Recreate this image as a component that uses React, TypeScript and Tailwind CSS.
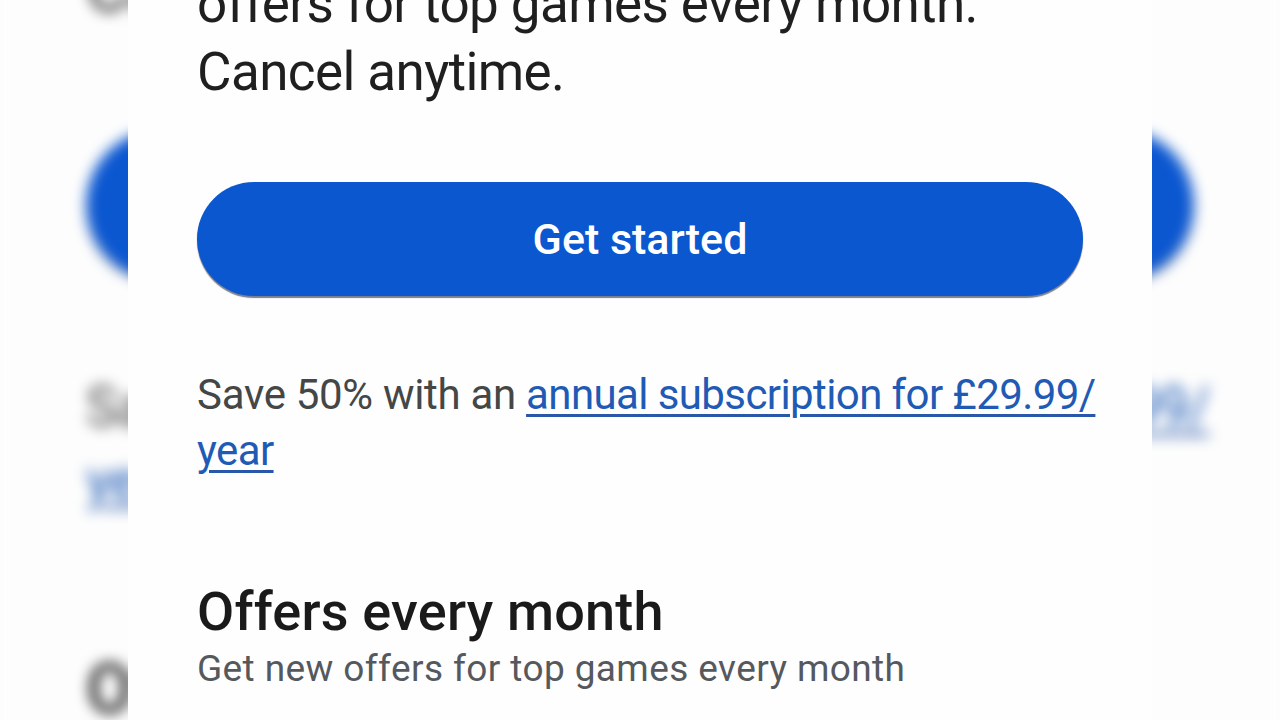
import React from 'react';

const font = { fontFamily: 'Roboto, "Noto Sans", sans-serif' };

function OfferContent() {
  return (
    <div className="flex flex-col pl-[69px] pr-[69px]" style={font}>
      <p className="-mt-[30px] text-[53px] leading-[68px] text-[#1f1f1f] tracking-[-0.6px]">
        offers for top games every month.
        <br />
        Cancel anytime.
      </p>

      <button className="mt-[76px] h-[114px] w-[886px] rounded-full bg-[#0b57d0] text-[43px] font-medium text-white shadow-[0_2px_1px_rgba(10,20,50,0.55)]">
        Get started
      </button>

      <p className="mt-[71px] w-[925px] text-[42px] leading-[56px] text-[#444746] tracking-[-0.3px]">
        Save 50% with an{' '}
        <a className="text-[#1f5bb5] underline decoration-[#2a58a8] decoration-[3px] underline-offset-[5px] tracking-[-0.6px]">
          annual subscription for £29.99/ year
        </a>
      </p>

      <h2 className="mt-[103px] text-[54px] leading-[60px] font-medium text-[#1a1a1a] tracking-[0.2px]">
        Offers every month
      </h2>
      <p className="mt-[5px] text-[37px] leading-[44px] text-[#55595e] tracking-[0.4px]">
        Get new offers for top games every month
      </p>
    </div>
  );
}

export default function App() {
  return (
    <div className="relative h-[720px] w-[1280px] overflow-hidden bg-[#fdfdfd]">
      {/* blurred, zoomed copy behind the frame */}
      <div className="absolute inset-0 blur-[7px]">
        <div className="mx-auto h-full w-[1024px] origin-[512px_353px] scale-x-[1.25] scale-y-[1.3] bg-[#fdfdfd]">
          <OfferContent />
        </div>
      </div>

      <div className="relative mx-auto h-full w-[1024px] overflow-hidden bg-[#fefefe]">
        <OfferContent />
      </div>
    </div>
  );
}
